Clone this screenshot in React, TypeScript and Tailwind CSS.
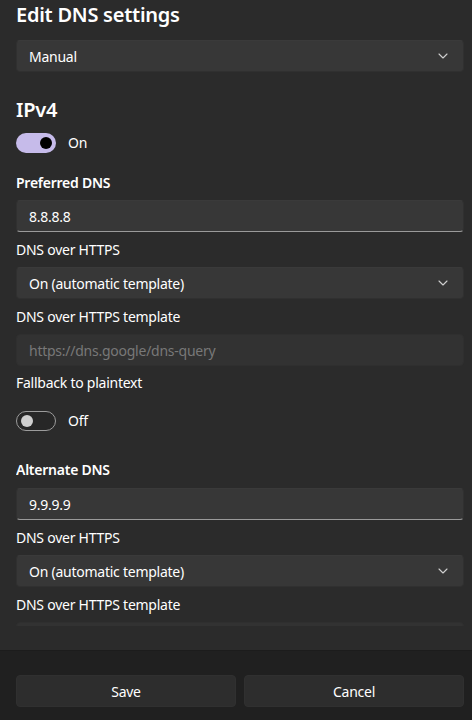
import React from "react";

const font = { fontFamily: '"Segoe UI", "Noto Sans", "Open Sans", sans-serif', letterSpacing: "-0.25px" };

function Chevron() {
  return (
    <svg width="10" height="6" viewBox="0 0 10 6" className="shrink-0">
      <path d="M1 1l4 4 4-4" fill="none" stroke="#d0d0d0" strokeWidth="1.1" strokeLinecap="round" strokeLinejoin="round" />
    </svg>
  );
}

function Select({ value, className = "" }: { value: string; className?: string }) {
  return (
    <div
      className={`flex h-8 items-center justify-between rounded-[4px] border border-[#303030] border-t-[#3a3a3a] bg-[#373737] pl-3 pr-[15px] text-[14px] text-white ${className}`}
    >
      <span>{value}</span>
      <Chevron />
    </div>
  );
}

function TextBox({ value, className = "" }: { value: string; className?: string }) {
  return (
    <div
      className={`flex h-8 items-center rounded-[4px] border border-[#303030] border-t-[#3a3a3a] border-b-[#9a9a9a] bg-[#373737] px-3 text-[14px] text-white ${className}`}
    >
      {value}
    </div>
  );
}

function DisabledBox({ placeholder, className = "" }: { placeholder?: string; className?: string }) {
  return (
    <div
      className={`flex h-8 items-center rounded-[4px] border border-[#2f2f2f] bg-[#323232] px-3 text-[14px] text-[#787878] ${className}`}
    >
      {placeholder}
    </div>
  );
}

function Toggle({ on, className = "" }: { on: boolean; className?: string }) {
  return (
    <div className={`flex h-5 items-center gap-3 ${className}`}>
      {on ? (
        <div className="flex h-5 w-10 items-center justify-end rounded-full bg-[#c6bbea] pr-[4px]">
          <div className="h-3 w-3 rounded-full bg-black" />
        </div>
      ) : (
        <div className="flex h-5 w-10 items-center rounded-full border border-[#9c9c9c] bg-[#272727] pl-[4px]">
          <div className="h-3 w-3 rounded-full bg-[#cfcfcf]" />
        </div>
      )}
      <span className="text-[14px] leading-5 text-white">{on ? "On" : "Off"}</span>
    </div>
  );
}

function Label({ children, bold = false, className = "" }: { children: React.ReactNode; bold?: boolean; className?: string }) {
  return (
    <div className={`text-[14px] leading-5 text-white ${bold ? "font-semibold" : ""} ${className}`}>{children}</div>
  );
}

export default function App() {
  return (
    <div className="flex h-[720px] w-[472px] flex-col overflow-hidden bg-[#2b2b2b]" style={font}>
      <div className="h-[650px] shrink-0 pl-4 pr-2">
        <div className="flex h-[626px] flex-col overflow-hidden">
          <h1 className="mt-px text-[20px] font-semibold leading-7 text-white">Edit DNS settings</h1>
          <Select value="Manual" className="mt-[11px] shrink-0" />

          <h2 className="mt-6 text-[20px] font-semibold leading-7 text-white">IPv4</h2>
          <Toggle on className="mt-[9px] shrink-0" />

          <Label bold className="mt-5">Preferred DNS</Label>
          <TextBox value="8.8.8.8" className="mt-[7px] shrink-0" />
          <Label className="mt-2">DNS over HTTPS</Label>
          <Select value="On (automatic template)" className="mt-[7px] shrink-0" />
          <Label className="mt-2">DNS over HTTPS template</Label>
          <DisabledBox placeholder="https://dns.google/dns-query" className="mt-[7px] shrink-0" />
          <Label className="mt-[7px]">Fallback to plaintext</Label>
          <Toggle on={false} className="mt-[18px] shrink-0" />

          <Label bold className="mt-[29px]">Alternate DNS</Label>
          <TextBox value="9.9.9.9" className="mt-2 shrink-0" />
          <Label className="mt-2">DNS over HTTPS</Label>
          <Select value="On (automatic template)" className="mt-[7px] shrink-0" />
          <Label className="mt-2">DNS over HTTPS template</Label>
          <DisabledBox className="mt-[7px] shrink-0" />
        </div>
      </div>

      <div className="flex flex-1 gap-2 border-t border-[#1c1c1c] bg-[#202020] pl-4 pr-2 pt-6">
        <button className="flex h-8 flex-1 items-center justify-center rounded-[4px] border border-[#303030] bg-[#2d2d2d] text-[14px] text-white">
          Save
        </button>
        <button className="flex h-8 flex-1 items-center justify-center rounded-[4px] border border-[#303030] bg-[#2d2d2d] text-[14px] text-white">
          Cancel
        </button>
      </div>
    </div>
  );
}
